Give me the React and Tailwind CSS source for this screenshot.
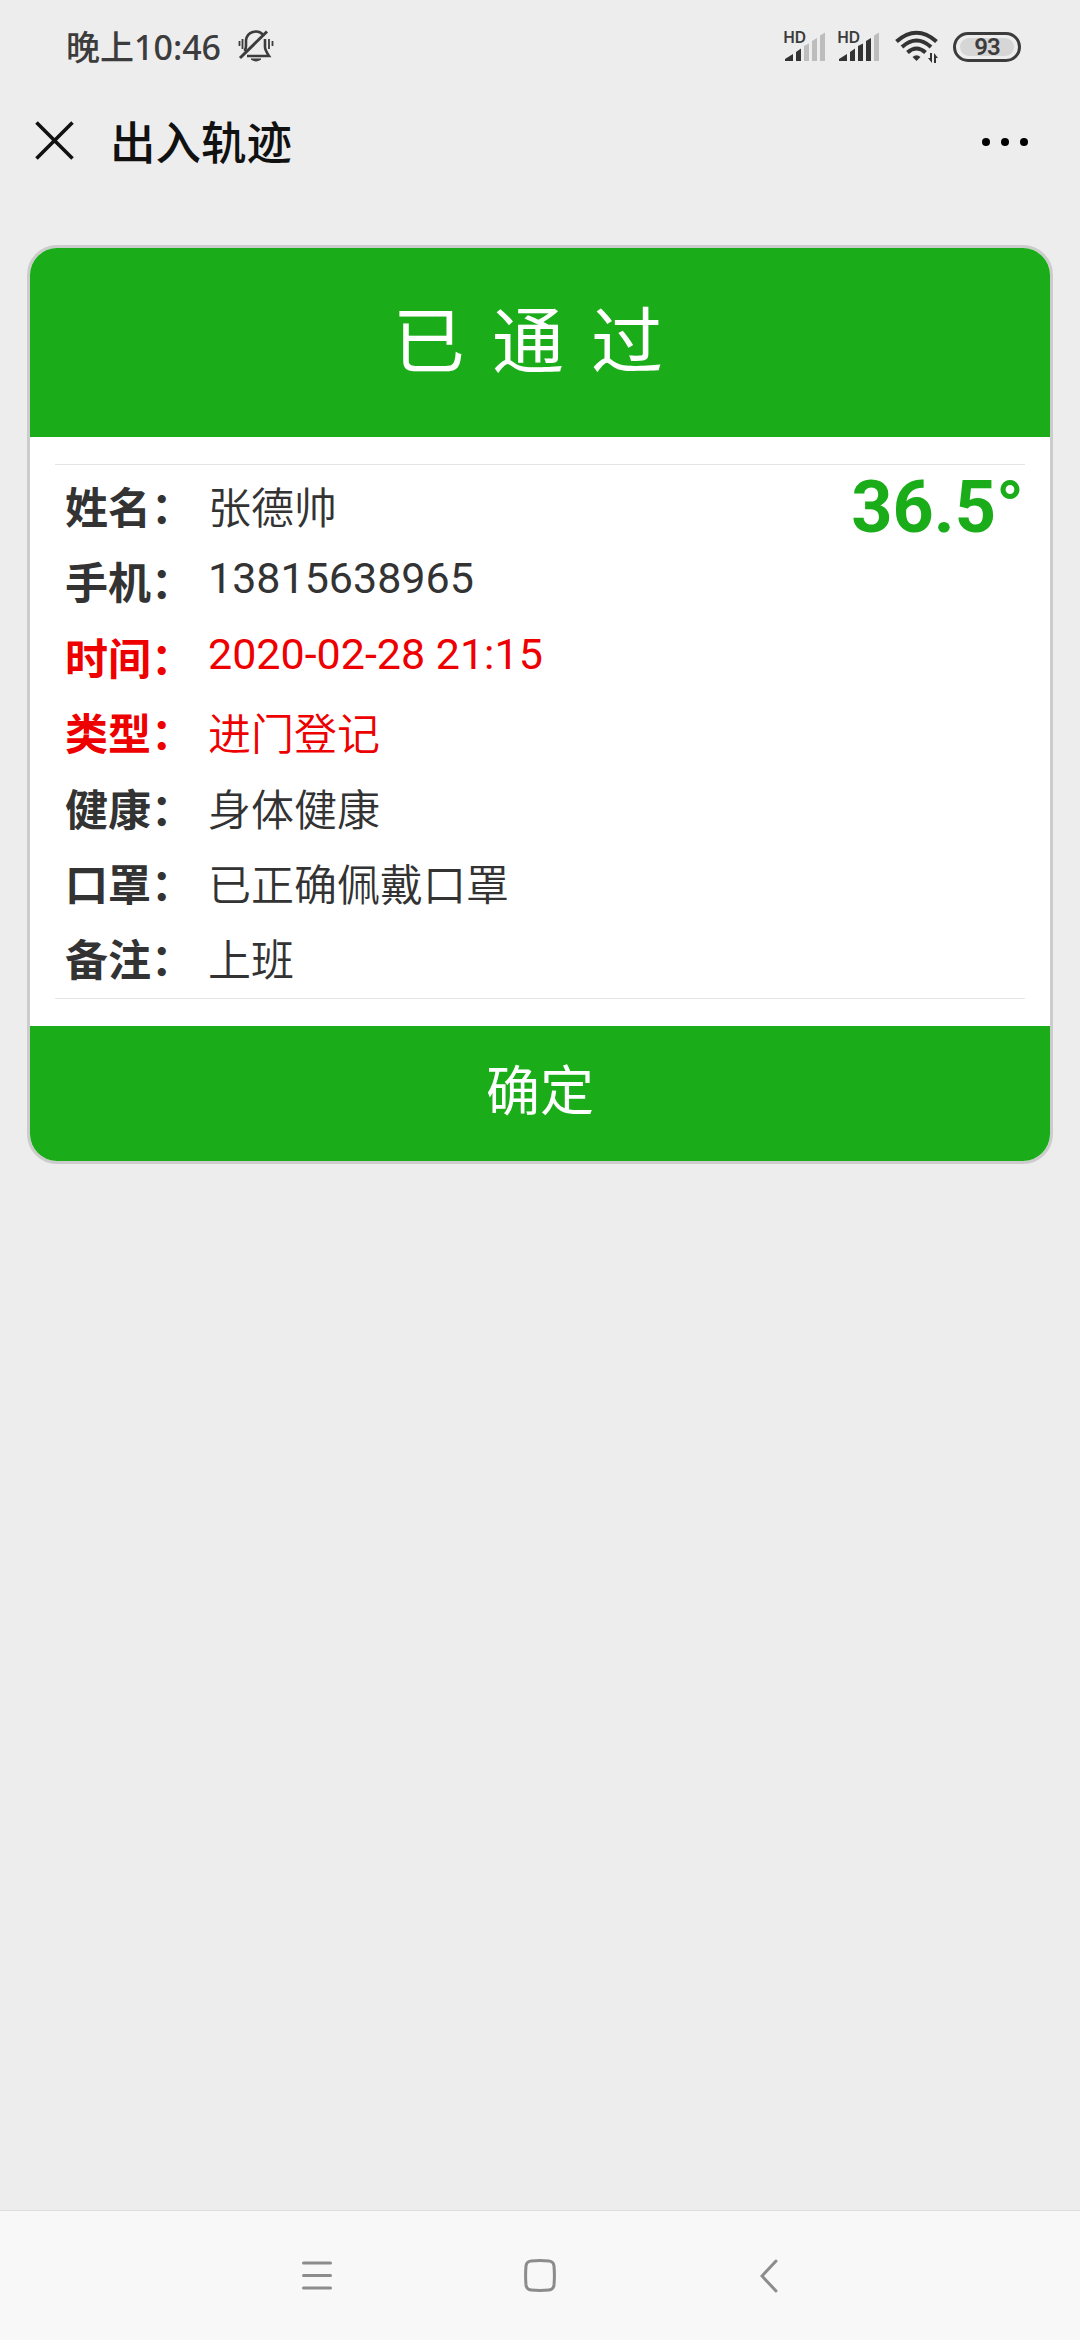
import React from 'react'

const records = [
    { label: '姓名：', value: '张德帅', height: 'h-[76px]' },
    { label: '手机：', value: '13815638965', numeric: true, height: 'h-[75px]' },
    { label: '时间：', value: '2020-02-28 21:15', numeric: true, red: true, height: 'h-[76px]' },
    { label: '类型：', value: '进门登记', red: true, height: 'h-[75px]' },
    { label: '健康：', value: '身体健康', height: 'h-[76px]' },
    { label: '口罩：', value: '已正确佩戴口罩', height: 'h-[75px]' },
    { label: '备注：', value: '上班', height: 'h-[75px]' },
]

function MuteIcon() {
    return (
        <svg width="36" height="34" viewBox="0 0 36 34" fill="none" stroke="#3c3c3c" strokeWidth="2.6">
            <path d="M25 4.5 A10 10 0 0 0 8 10 V16 Q8 19 6.5 21" />
            <path d="M27 9 V17 Q27 20 31 26 H9" />
            <path d="M2 28 L29 1.5" strokeWidth="3" />
            <path d="M13 29 H23 Q18 33 13 29 Z" fill="#3c3c3c" strokeWidth="1" />
            <path d="M1.5 11 V16 M4.5 9 V19 M31 9 V19 M34.5 11 V16" strokeWidth="1.8" />
        </svg>
    )
}

function Signal({ level }) {
    const bars = [
        'M0 30 V28 L8 23 V30 Z',
        'M11 30 V21 L16 17.5 V30 Z',
        'M19 30 V15 L24 12.5 V30 Z',
        'M27 30 V10 L32 7 V30 Z',
        'M35 30 V4.5 L40 1.5 V30 Z',
    ]
    return (
        <div className="relative h-[32px] w-[42px]">
            <svg width="42" height="32" viewBox="0 0 42 32">
                {bars.map((d, i) => (
                    <path key={i} d={d} fill={i < level ? '#333333' : '#bdbdbd'} />
                ))}
            </svg>
            <span className="absolute -left-[2px] -top-[2px] font-['Noto_Sans',sans-serif] text-[16px] font-semibold leading-[16px] tracking-[-0.5px] text-[#3c3c3c]">HD</span>
        </div>
    )
}

function WifiIcon() {
    return (
        <svg width="43" height="34" viewBox="0 0 43 34" fill="none" stroke="#333333" strokeWidth="4">
            <path d="M1.5 11.5 Q21.5 -6 41.5 11.5" />
            <path d="M7 17 Q21.5 4 36 17" />
            <path d="M12.5 22.5 Q21.5 14.5 30.5 22.5" />
            <path d="M17.5 27 Q21.5 23.5 25.5 27 L21.5 31 Z" fill="#333333" stroke="none" />
            <path d="M35 23 H37 V33 L33 28 H35 Z M39 33 V23 L43 28 H41 V33 Z" fill="#333333" stroke="none" />
        </svg>
    )
}

function StatusBar() {
    return (
        <div className="flex h-[94px] items-center justify-between pl-[66px] pr-[59px] text-[#3c3c3c]">
            <div className="flex items-center gap-[17px]">
                <span className="font-['Noto_Sans','Noto_Sans_CJK_SC',sans-serif] text-[34px] font-medium leading-none">晚上10:46</span>
                <MuteIcon />
            </div>
            <div className="flex items-center">
                <Signal level={2} />
                <div className="ml-[12px]"><Signal level={4} /></div>
                <div className="ml-[14px]"><WifiIcon /></div>
                <div className="ml-[15px] flex h-[30px] w-[68px] items-center justify-center rounded-full border-[3px] border-[#3c3c3c] p-[3px]">
                    <div className="flex h-full w-[54px] items-center justify-center rounded-full bg-[#d6d6d6] font-[Roboto,sans-serif] text-[24px] font-semibold leading-none tracking-[-1px]">93</div>
                </div>
            </div>
        </div>
    )
}

function TitleBar() {
    return (
        <div className="flex h-[114px] items-start justify-between pl-[35px] pr-[52px]">
            <div className="flex items-center pt-[16px]">
                <svg width="39" height="39" viewBox="0 0 39 39" stroke="#111111" strokeWidth="3.6">
                    <path d="M1.5 1.5 L37.5 37.5 M37.5 1.5 L1.5 37.5" />
                </svg>
                <h1 className="ml-[36px] font-['Noto_Sans_CJK_SC',sans-serif] text-[45.5px] font-medium leading-[60px] text-[#111111]">出入轨迹</h1>
            </div>
            <div className="flex gap-[11px] pt-[44px]">
                <div className="h-[8px] w-[8px] rounded-full bg-black"></div>
                <div className="h-[8px] w-[8px] rounded-full bg-black"></div>
                <div className="h-[8px] w-[8px] rounded-full bg-black"></div>
            </div>
        </div>
    )
}

function Record({ item }) {
    return (
        <div className={`flex items-center ${item.height} ${item.red ? 'text-[#ee0000]' : 'text-[#333333]'}`}>
            <span className="w-[143px] font-bold">{item.label}</span>
            <span className={item.numeric ? 'pb-[4px] font-[Roboto,sans-serif]' : 'font-[350]'}>{item.value}</span>
        </div>
    )
}

function PassCard() {
    return (
        <div className="mx-[27px] mt-[37px] overflow-hidden rounded-[30px] border-[3px] border-[#cccccc] bg-white font-['Noto_Sans_CJK_SC',sans-serif]">
            <div className="flex h-[189px] items-center justify-center bg-[#1aad19] pb-[14px] pr-[24px] text-[72px] leading-none text-white">
                <span className="whitespace-pre [word-spacing:11px]">已 通 过</span>
            </div>
            <div className="mx-[25px] my-[27px] flex items-start justify-between border-y border-[#e5e5e5] pl-[10px] pr-[1px] text-[43px] leading-none">
                <div className="flex flex-col pb-[3px] pt-[2px]">
                    {records.map((item) => <Record key={item.label} item={item} />)}
                </div>
                <span className="pt-[7px] font-[Roboto,sans-serif] text-[72px] font-bold text-[#1aad19]">36.5°</span>
            </div>
            <button className="flex h-[135px] w-full items-center justify-center bg-[#1aad19] pb-[11px] text-[54px] leading-none text-white">确定</button>
        </div>
    )
}

function NavBar() {
    return (
        <div className="mt-auto grid h-[130px] grid-cols-[302px_1fr_32px_1fr_302px] items-center border-t border-[#dedede] bg-[#f8f8f8]">
            <svg className="col-start-2" width="30" height="29" viewBox="0 0 30 29" stroke="#8c8c8c" strokeWidth="3" strokeLinecap="round">
                <path d="M1.5 2 H28.5 M1.5 14.5 H28.5 M1.5 27 H28.5" />
            </svg>
            <svg width="32" height="33" viewBox="0 0 32 33" fill="none" stroke="#8c8c8c" strokeWidth="3">
                <path d="M7 2 Q16 1.2 25 2 Q29.5 2.5 30 7 Q30.8 16.5 30 26 Q29.5 30.5 25 31 Q16 31.8 7 31 Q2.5 30.5 2 26 Q1.2 16.5 2 7 Q2.5 2.5 7 2 Z" />
            </svg>
            <svg className="justify-self-end" width="18" height="34" viewBox="0 0 18 34" fill="none" stroke="#8c8c8c" strokeWidth="3" strokeLinecap="round">
                <path d="M16 2 L2 17 L16 32" />
            </svg>
        </div>
    )
}

export default function App() {
    return (
        <div className="flex h-[2340px] w-[1080px] flex-col overflow-hidden bg-[#ededed]">
            <StatusBar />
            <TitleBar />
            <PassCard />
            <NavBar />
        </div>
    )
}
